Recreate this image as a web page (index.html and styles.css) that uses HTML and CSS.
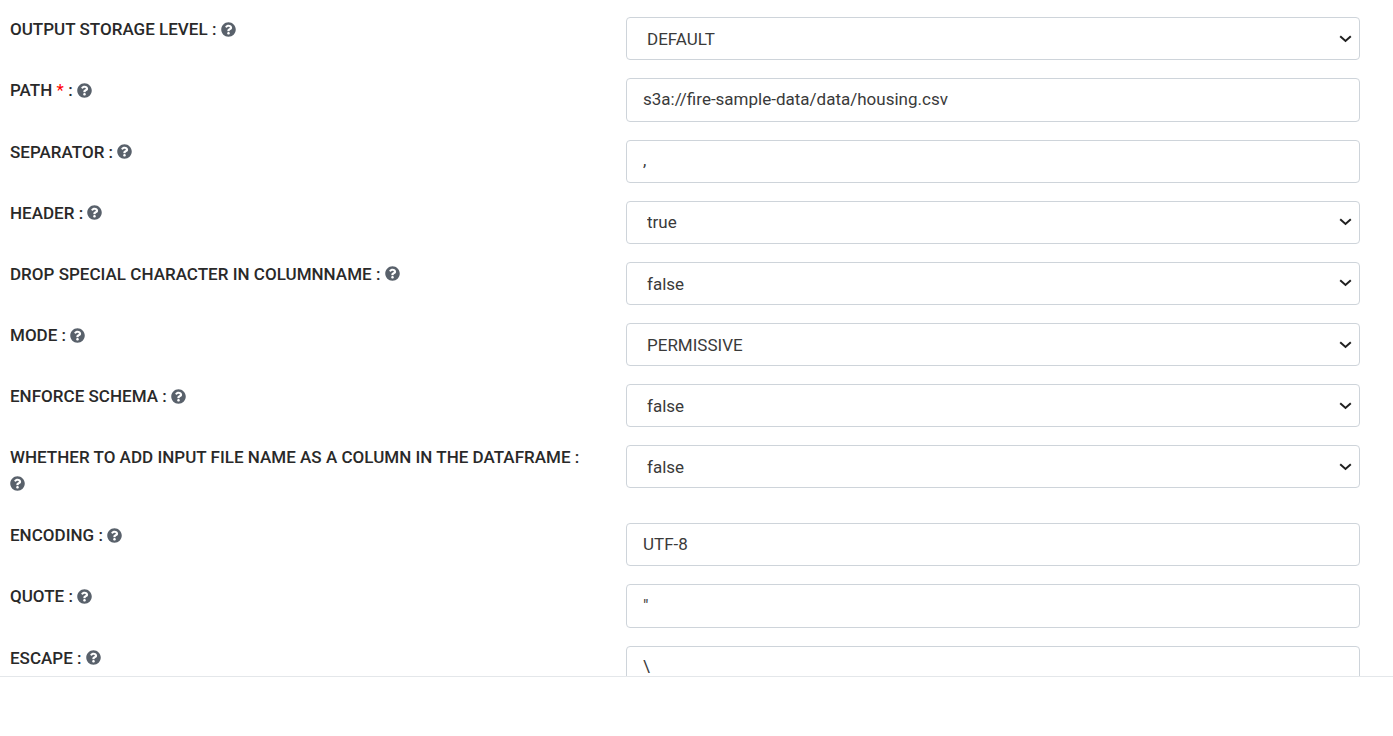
FILE: index.html
```html
<!DOCTYPE html>
<html lang="en">
<head>
<meta charset="utf-8">
<title>Node configuration</title>
<link rel="stylesheet" href="styles.css">
</head>
<body>
<svg class="sprite" aria-hidden="true"><symbol id="help" viewBox="0 0 512 512"><path d="M504 256c0 136.997-111.043 248-248 248S8 392.997 8 256C8 119.083 119.043 8 256 8s248 111.083 248 248zM262.655 90c-54.497 0-89.255 22.957-116.549 63.758-3.536 5.286-2.353 12.415 2.715 16.258l34.699 26.31c5.205 3.947 12.621 3.008 16.665-2.122 17.864-22.658 30.113-35.797 57.303-35.797 20.429 0 45.698 13.148 45.698 32.958 0 14.976-12.363 22.667-32.534 33.976C247.128 238.528 216 254.941 216 296v4c0 6.627 5.373 12 12 12h56c6.627 0 12-5.373 12-12v-1.333c0-28.462 83.186-29.647 83.186-106.667 0-58.002-60.165-102-116.531-102zM256 338c-25.365 0-46 20.635-46 46 0 25.364 20.635 46 46 46s46-20.636 46-46c0-25.365-20.635-46-46-46z"/></symbol></svg>
<form class="panel">
<div class="row"><label class="label" for="f1">OUTPUT STORAGE LEVEL : <svg class="help"><use href="#help"/></svg></label><select class="control select" id="f1"><option>DEFAULT</option></select></div>
<div class="row"><label class="label" for="f2">PATH <span class="required">*</span> : <svg class="help"><use href="#help"/></svg></label><input class="control" id="f2" value="s3a://fire-sample-data/data/housing.csv"></div>
<div class="row"><label class="label" for="f3">SEPARATOR : <svg class="help"><use href="#help"/></svg></label><input class="control" id="f3" value=","></div>
<div class="row"><label class="label" for="f4">HEADER : <svg class="help"><use href="#help"/></svg></label><select class="control select" id="f4"><option>true</option></select></div>
<div class="row"><label class="label" for="f5">DROP SPECIAL CHARACTER IN COLUMNNAME : <svg class="help"><use href="#help"/></svg></label><select class="control select" id="f5"><option>false</option></select></div>
<div class="row"><label class="label" for="f6">MODE : <svg class="help"><use href="#help"/></svg></label><select class="control select" id="f6"><option>PERMISSIVE</option></select></div>
<div class="row"><label class="label" for="f7">ENFORCE SCHEMA : <svg class="help"><use href="#help"/></svg></label><select class="control select" id="f7"><option>false</option></select></div>
<div class="row row-tall"><label class="label" for="f8">WHETHER TO ADD INPUT FILE NAME AS A COLUMN IN THE DATAFRAME : <svg class="help"><use href="#help"/></svg></label><select class="control select" id="f8"><option>false</option></select></div>
<div class="row"><label class="label" for="f9">ENCODING : <svg class="help"><use href="#help"/></svg></label><input class="control" id="f9" value="UTF-8"></div>
<div class="row"><label class="label" for="f10">QUOTE : <svg class="help"><use href="#help"/></svg></label><input class="control" id="f10" value="&quot;"></div>
<div class="row"><label class="label" for="f11">ESCAPE : <svg class="help"><use href="#help"/></svg></label><input class="control" id="f11" value="\"></div>
</form>
</body>
</html>
```
FILE: styles.css
```css
* { box-sizing: border-box; }
body { margin: 0; background: #fff; color: #212529; font-family: Roboto, sans-serif; overflow: hidden; }
.sprite { display: none; }
.panel { height: 677px; overflow: hidden; padding: 17.3px 33px 0 10px; border-bottom: 1px solid #e4e7ea; }
.row { display: grid; grid-template-columns: 576px 734px; column-gap: 40px; align-items: start; height: 61.15px; }
.row-tall { height: 78px; }
.label { margin-top: -1px; font-size: 17px; font-weight: 500; line-height: 26px; letter-spacing: .018px; color: #292929; }
.required { color: #f00; font-weight: 400; }
.help { width: 15px; height: 15px; vertical-align: -1.6px; fill: #59616b; }
.control { width: 100%; height: 43.2px; margin: 0; padding: 6px 16px 8px; border: 1px solid #ced4da; border-radius: 4px; background: #fff; color: #3a3a3a; font: 400 17px/24px Roboto, sans-serif; outline: 0; }
.select { appearance: none; padding: 7.1px 36px 6.9px 20px; background: #fff url("data:image/svg+xml,%3Csvg xmlns='http://www.w3.org/2000/svg' width='13' height='8' viewBox='0 0 13 8'%3E%3Cpath d='M1.2 1.2l5.3 4.8L11.8 1.2' fill='none' stroke='%23212121' stroke-width='2'/%3E%3C/svg%3E") no-repeat right 7px center; }
```
